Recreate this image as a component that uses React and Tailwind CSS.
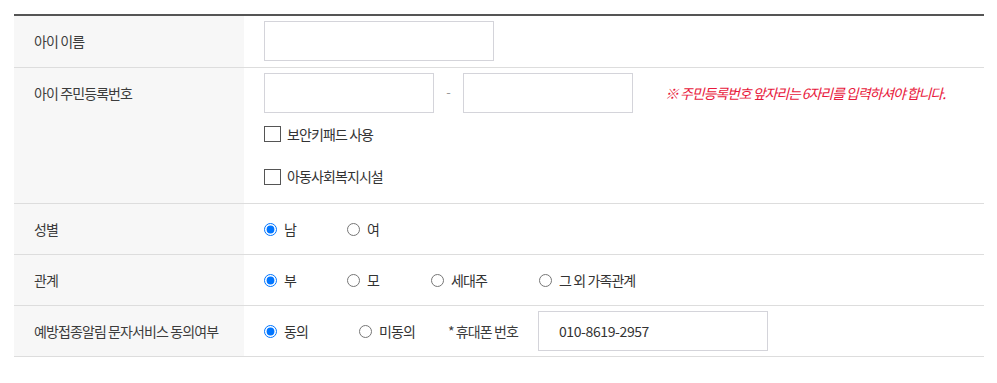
import React from "react";

const font = { fontFamily: '"Noto Sans CJK KR", "Noto Sans", sans-serif' };

function Label({ children, top }) {
  return (
    <div className="w-[230px] shrink-0 bg-[#f7f7f7] pl-5 text-[14px] text-[#3c3c3c] tracking-[-0.9px]">
      <div className={top ? "h-[51px] flex items-center" : "h-full flex items-center"}>{children}</div>
    </div>
  );
}

function Radio({ name, label, checked, className = "" }) {
  return (
    <label className={"flex items-center gap-[7px] text-[14px] text-[#333] tracking-[-0.9px] " + className}>
      <input type="radio" name={name} defaultChecked={checked} className="m-0 w-[13px] h-[13px]" />
      <span>{label}</span>
    </label>
  );
}

function Box({ label }) {
  return (
    <label className="flex items-center gap-[6px] text-[14px] text-[#333] tracking-[-0.9px]">
      <span className="w-[17px] h-[16px] border border-[#555] bg-white block" />
      <span>{label}</span>
    </label>
  );
}

export default function App() {
  return (
    <div className="w-[997px] h-[383px] bg-white pt-[14px] pl-[14px]" style={font}>
      <div className="w-[970px] border-t-2 border-[#555]">
        {/* row 1 */}
        <div className="flex h-[52px] border-b border-[#dddddd]">
          <Label>아이 이름</Label>
          <div className="flex-1 pl-5 pt-[5px]">
            <div className="w-[230px] h-[40px] border border-[#d4d4da] bg-white" />
          </div>
        </div>
        {/* row 2 */}
        <div className="flex h-[136px] border-b border-[#dddddd]">
          <Label top>아이 주민등록번호</Label>
          <div className="flex-1 pl-5 pt-[5px]">
            <div className="flex items-center h-[40px]">
              <div className="w-[170px] h-[40px] border border-[#d4d4da] bg-white" />
              <span className="w-[29px] text-center text-[13px] text-[#999] -mt-[2px]">-</span>
              <div className="w-[170px] h-[40px] border border-[#d4d4da] bg-white" />
              <span className="ml-[32px] text-[14px] italic text-[#e8193c] tracking-[-1.1px]">
                ※ 주민등록번호 앞자리는 6자리를 입력하셔야 합니다.
              </span>
            </div>
            <div className="h-[42px] flex items-center">
              <Box label="보안키패드 사용" />
            </div>
            <div className="h-[43px] flex items-center">
              <Box label="아동사회복지시설" />
            </div>
          </div>
        </div>
        {/* row 3 */}
        <div className="flex h-[51px] border-b border-[#dddddd]">
          <Label>성별</Label>
          <div className="flex-1 pl-5 flex items-center">
            <Radio name="sex" label="남" checked className="w-[83px]" />
            <Radio name="sex" label="여" />
          </div>
        </div>
        {/* row 4 */}
        <div className="flex h-[51px] border-b border-[#dddddd]">
          <Label>관계</Label>
          <div className="flex-1 pl-5 flex items-center">
            <Radio name="rel" label="부" checked className="w-[83px]" />
            <Radio name="rel" label="모" className="w-[84px]" />
            <Radio name="rel" label="세대주" className="w-[108px]" />
            <Radio name="rel" label="그 외 가족관계" />
          </div>
        </div>
        {/* row 5 */}
        <div className="flex h-[51px] border-b border-[#dddddd]">
          <Label>예방접종알림 문자서비스 동의여부</Label>
          <div className="flex-1 pl-5 flex items-center">
            <Radio name="agree" label="동의" checked className="w-[95px]" />
            <Radio name="agree" label="미동의" className="w-[89px]" />
            <span className="w-[90px] text-[14px] text-[#3c3c3c] tracking-[-0.9px]">* 휴대폰 번호</span>
            <div className="w-[230px] h-[40px] border border-[#d4d4da] bg-white flex items-center pl-5 text-[14px] text-[#333] tracking-[-0.4px]">
              010-8619-2957
            </div>
          </div>
        </div>
      </div>
    </div>
  );
}
